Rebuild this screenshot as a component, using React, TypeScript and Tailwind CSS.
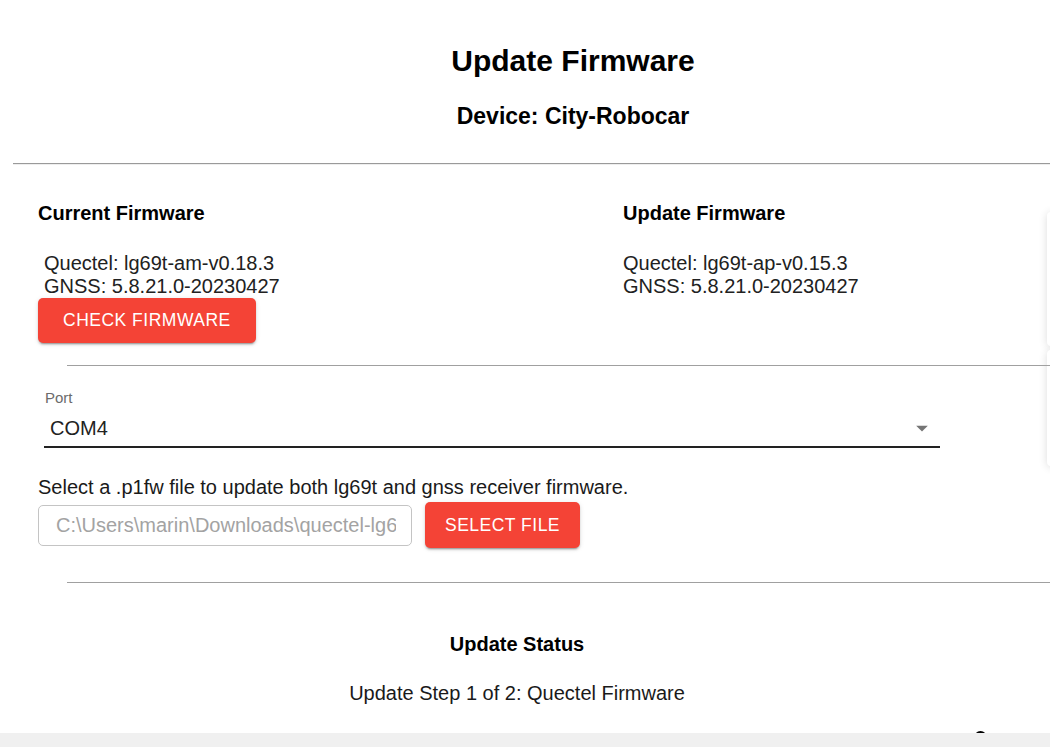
import React from "react";

const btnShadow =
  "shadow-[0px_3px_1px_-2px_rgba(0,0,0,0.2),0px_2px_2px_0px_rgba(0,0,0,0.14),0px_1px_5px_0px_rgba(0,0,0,0.12)]";

export default function App() {
  return (
    <div className="relative w-[1050px] h-[747px] overflow-hidden bg-white font-['Liberation_Sans',Arial,sans-serif] text-[#212121]">
      {/* partially visible side cards at the right edge */}
      <div className="absolute left-[1047px] top-[212px] w-[300px] h-[134px] bg-white rounded shadow-[0_1px_8px_rgba(0,0,0,0.14)]" />
      <div className="absolute left-[1047px] top-[350px] w-[300px] h-[116px] bg-white rounded shadow-[0_1px_8px_rgba(0,0,0,0.14)]" />

      <div className="relative flex flex-col">
        {/* Header */}
        <div className="ml-[13px] w-[1120px] pt-[43px] flex flex-col items-center">
          <h1 className="text-[30px] leading-[35px] font-bold text-black">Update Firmware</h1>
          <h2 className="mt-[25px] text-[23px] leading-[27px] font-bold text-black">Device: City-Robocar</h2>
        </div>

        <div className="mt-[33px] ml-[13px] w-[1100px] border-t border-t-[#9a9a9a] border-b border-b-[#eeeeee]" />

        {/* Firmware columns */}
        <div className="flex pl-[38px] mt-[37px]">
          <div className="w-[585px] flex flex-col items-start">
            <h3 className="text-[20px] leading-[23px] font-bold text-black">Current Firmware</h3>
            <div className="mt-[27px] pl-[6px] text-[20px] leading-[23px]">
              <div>Quectel: lg69t-am-v0.18.3</div>
              <div>GNSS: 5.8.21.0-20230427</div>
            </div>
            <button
              className={`h-[45px] px-[25px] rounded-[5px] bg-[#f44336] text-white text-[17.5px] tracking-[0.5px] uppercase ${btnShadow}`}
            >
              Check Firmware
            </button>
          </div>
          <div className="flex flex-col items-start">
            <h3 className="text-[20px] leading-[23px] font-bold text-black">Update Firmware</h3>
            <div className="mt-[27px] text-[20px] leading-[23px]">
              <div>Quectel: lg69t-ap-v0.15.3</div>
              <div>GNSS: 5.8.21.0-20230427</div>
            </div>
          </div>
        </div>

        <div className="mt-[22px] ml-[67px] w-[1000px] border-t border-t-[#a0a0a0]" />

        {/* Port select */}
        <div className="ml-[44px] w-[896px] mt-[23px] flex flex-col">
          <div className="pl-[1px] text-[15px] leading-[18px] text-[#6b6b6b]">Port</div>
          <div className="mt-[7px] flex items-center justify-between pl-[6px] pr-[4px] pb-[4px] border-b-2 border-b-[#222222]">
            <span className="text-[20px] leading-[23px] text-[#222222]">COM4</span>
            <svg width="28" height="28" viewBox="0 0 24 24" className="text-[#757575]">
              <path d="M7 10l5 5 5-5z" fill="currentColor" />
            </svg>
          </div>
        </div>

        {/* File select */}
        <div className="pl-[38px] mt-[28px] text-[20px] leading-[23px] text-[#1a1a1a]">
          Select a .p1fw file to update both lg69t and gnss receiver firmware.
        </div>
        <div className="pl-[38px] mt-[3px] flex items-center">
          <div className="w-[374px] h-[41px] flex items-center pl-[17px] pr-[15px] border border-[#c4c4c4] rounded-[5px] overflow-hidden">
            <span className="whitespace-nowrap overflow-hidden text-[20px] leading-[23px] text-[#a3a3a3]">
              C:\Users\marin\Downloads\quectel-lg69t-ap-v0.15.3.p1fw
            </span>
          </div>
          <button
            className={`ml-[13px] h-[46px] w-[155px] rounded-[5px] bg-[#f44336] text-white text-[17.5px] tracking-[0.5px] uppercase ${btnShadow}`}
          >
            Select File
          </button>
        </div>

        <div className="mt-[34px] ml-[67px] w-[1000px] border-t border-t-[#a0a0a0]" />

        {/* Status */}
        <div className="ml-[38px] w-[958px] mt-[50px] flex flex-col items-center">
          <h3 className="text-[20px] leading-[23px] font-bold text-black">Update Status</h3>
          <div className="mt-[26px] text-[20px] leading-[23px] text-[#1a1a1a]">
            Update Step 1 of 2: Quectel Firmware
          </div>
        </div>
      </div>

      {/* bottom scrollbar area */}
      <div className="absolute left-[974px] top-[731px] w-[13px] h-[13px] rounded-full border-2 border-black bg-white" />
      <div className="absolute left-0 bottom-0 w-full h-[14px] bg-[#f0f0f0]" />
    </div>
  );
}
